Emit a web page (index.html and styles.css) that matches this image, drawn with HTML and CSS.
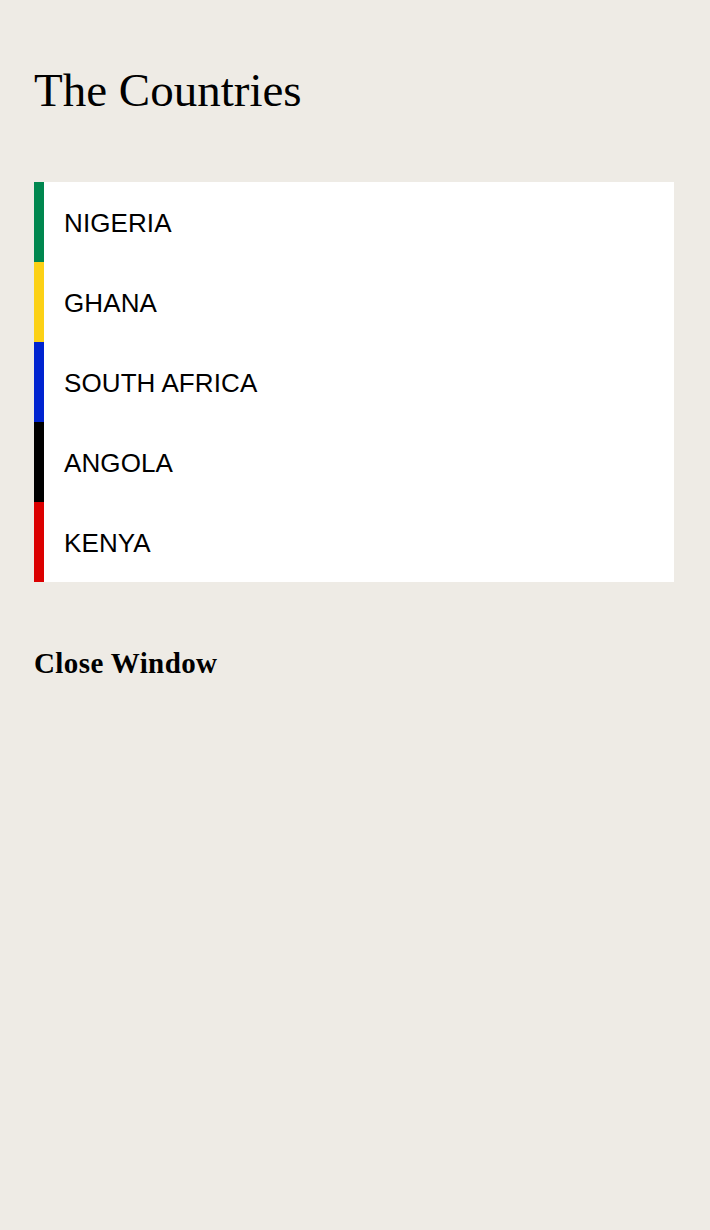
FILE: index.html
```html
<!DOCTYPE html>
<html>
<head>
<meta charset="utf-8">
<link rel="stylesheet" href="styles.css">
</head>
<body>
<main class="page">
  <h1 class="title">The Countries</h1>
  <ul class="countries">
    <li class="country green">NIGERIA</li>
    <li class="country yellow">GHANA</li>
    <li class="country blue">SOUTH AFRICA</li>
    <li class="country black">ANGOLA</li>
    <li class="country red">KENYA</li>
  </ul>
  <a class="close" href="#">Close Window</a>
</main>
</body>
</html>
```

FILE: styles.css
```css
html, body {
  margin: 0;
  padding: 0;
  background: #eeebe5;
}
.page {
  padding: 62px 36px 0 34px;
  display: flex;
  flex-direction: column;
  align-items: flex-start;
}
.title {
  margin: 0;
  font-family: "Liberation Serif", "DejaVu Serif", serif;
  font-weight: normal;
  font-size: 47px;
  line-height: 56px;
  color: #000;
  letter-spacing: 0;
}
.countries {
  list-style: none;
  margin: 64px 0 0 0;
  padding: 0;
  width: 640px;
  background: #fff;
}
.country {
  height: 80px;
  box-sizing: border-box;
  display: flex;
  align-items: center;
  padding: 2px 0 0 20px;
  border-left: 10px solid #000;
  font-family: "Liberation Sans", Arial, sans-serif;
  font-size: 26px;
  letter-spacing: 0.1px;
  color: #000;
}
.green { border-left-color: #00874f; }
.yellow { border-left-color: #fcd116; }
.blue { border-left-color: #0024d0; }
.black { border-left-color: #000; }
.red { border-left-color: #db0000; }
.close {
  margin-top: 64px;
  font-family: "Liberation Serif", "DejaVu Serif", serif;
  font-weight: bold;
  font-size: 29px;
  line-height: 34px;
  color: #000;
  text-decoration: none;
  letter-spacing: 0.4px;
}
```
